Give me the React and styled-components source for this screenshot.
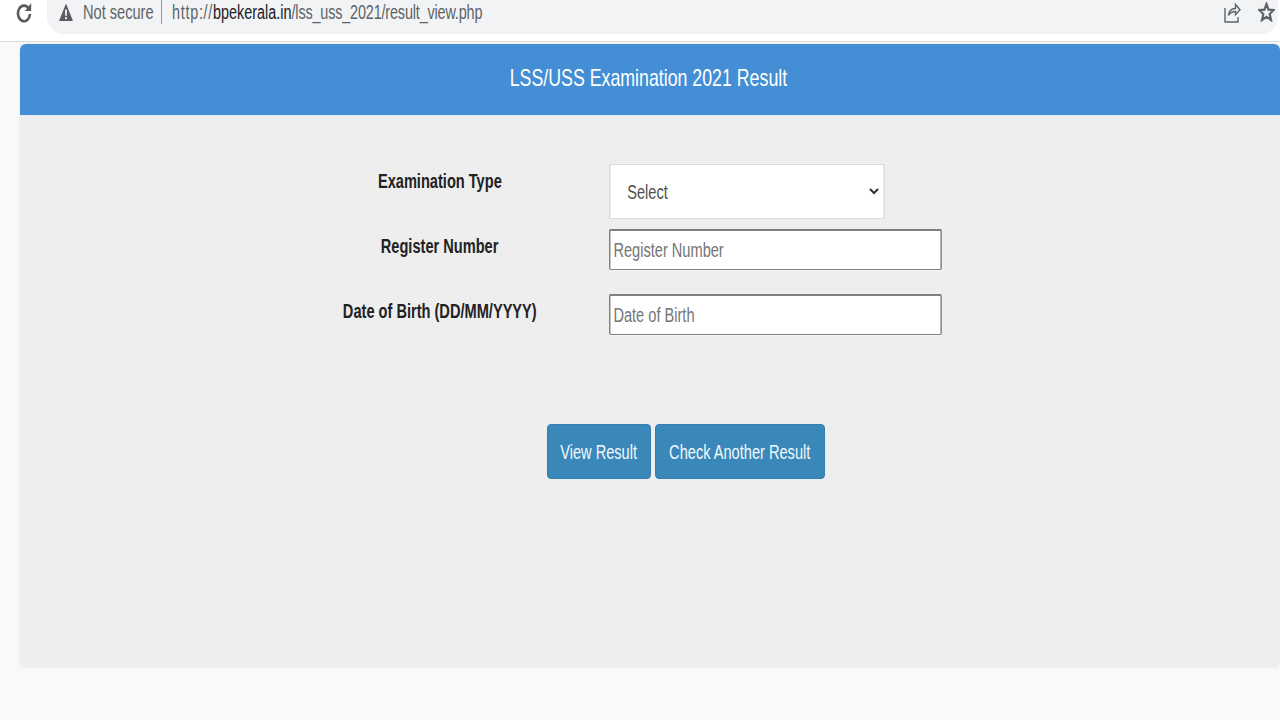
import React from "react";
import styled, { createGlobalStyle } from "styled-components";

const GlobalStyle = createGlobalStyle`
  html, body {
    margin: 0;
    padding: 0;
    height: 100%;
    background: #f9f9f9;
    font-family: "Liberation Sans", Arial, sans-serif;
    overflow: hidden;
  }
  * { box-sizing: border-box; }
`;

// the whole capture is squeezed horizontally, text and form controls with it
const SQUEEZE = 0.73;

const Squeezed = styled.span`
  display: inline-block;
  flex: none;
  white-space: nowrap;
  transform: scaleX(${(p) => p.$scale || SQUEEZE});
  transform-origin: ${(p) => p.$origin || "center"};
`;

const Page = styled.div`
  width: 1280px;
  height: 720px;
  display: flex;
  flex-direction: column;
`;

const BrowserBar = styled.div`
  height: 42px;
  flex: none;
  background: #fff;
  border-bottom: 1px solid #dcdcdc;
  display: flex;
  align-items: flex-start;
  padding-left: 16px;
`;

const Reload = styled.div`
  width: 18px;
  height: 24px;
  display: flex;
  align-items: center;
  margin-right: 13px;
  color: #5a5b5e;
`;

const Omnibox = styled.div`
  width: 1231px;
  height: 34px;
  background: #f1f3f4;
  border-radius: 0 0 17px 17px;
  display: flex;
  align-items: flex-start;
  padding: 0 3px 0 12px;
`;

const Warning = styled.div`
  height: 24px;
  display: flex;
  align-items: center;
  color: #5a5b5e;
  margin-right: 10px;
`;

const NotSecure = styled.div`
  width: 79px;
  height: 24px;
  display: flex;
  font-size: 20px;
  line-height: 25px;
  color: #5f6368;
  border-right: 1px solid #9a9a9a;
`;

const Url = styled.div`
  flex: 1;
  display: flex;
  min-width: 0;
  font-size: 20px;
  line-height: 25px;
  color: #5f6368;
  margin-left: 10px;
`;

const Scheme = styled.span`
  letter-spacing: 1px;
`;

const Host = styled.span`
  color: #202124;
`;

const UrlPath = styled.span`
  letter-spacing: -0.22px;
`;

const BarIcon = styled.div`
  width: 18px;
  height: 24px;
  display: flex;
  align-items: center;
  justify-content: center;
  margin-left: ${(p) => p.$gap}px;
  color: #5f6368;
`;

const Panel = styled.main`
  margin: 1px 0 0 19px;
  width: 1261px;
  height: 625px;
  background: #eeeeee;
  border-radius: 6px;
  display: flex;
  flex-direction: column;
`;

const PanelHeader = styled.header`
  height: 72px;
  margin: 1px 0 0 1px;
  padding: 0 3px 3px 0;
  background: #438ed4;
  border-radius: 6px 6px 0 0;
  border-bottom: 1px solid #e3ebf2;
  color: #fff;
  display: flex;
  align-items: center;
  justify-content: center;
  font-size: 24px;
`;

const Form = styled.form`
  display: flex;
  flex-direction: column;
  padding: 48px 0 0 301px;
`;

const Row = styled.div`
  display: grid;
  grid-template-columns: 240px auto;
  column-gap: 49px;
  align-items: start;
  margin-bottom: ${(p) => p.$bottom}px;
`;

const Label = styled.label`
  display: flex;
  justify-content: center;
  font-size: 20px;
  font-weight: 700;
  color: #222;
  line-height: 24px;
  padding-top: 5px;
`;

const ControlFrame = styled.div`
  position: relative;
  width: ${(p) => p.$width}px;
  height: ${(p) => p.$height}px;
`;

const Select = styled.select`
  appearance: none;
  width: ${276 / SQUEEZE}px;
  height: 55px;
  background: #fff;
  border-style: solid;
  border-color: #dadada;
  border-width: 1px 2px;
  border-radius: 0;
  padding-left: 23px;
  font-family: inherit;
  font-size: 20px;
  color: #505050;
  transform: scaleX(${SQUEEZE});
  transform-origin: left;
`;

const Chevron = styled.svg`
  position: absolute;
  top: 24px;
  right: 6px;
  pointer-events: none;
  color: #333;
`;

const Input = styled.input`
  width: ${333 / SQUEEZE}px;
  height: 41px;
  background: #fff;
  border: 2px solid #808080;
  border-bottom-width: 1px;
  border-radius: 2px;
  padding: 0 4px;
  font-family: inherit;
  font-size: 20px;
  transform: scaleX(${SQUEEZE});
  transform-origin: left;
  box-shadow: 0 1px 0 #f8f8f8;
  &::placeholder {
    color: #757575;
    opacity: 1;
  }
`;

const Actions = styled.div`
  display: flex;
  gap: 4px;
  margin: 89px 0 0 227px;
`;

const Button = styled.button`
  height: 55px;
  width: ${(p) => p.$width}px;
  display: flex;
  align-items: center;
  justify-content: center;
  background: #3a87b9;
  border: 1px solid #3580b0;
  border-radius: 4px;
  color: #f2f8fc;
  font-family: inherit;
  font-size: 20px;
  padding: 2px 0 0;
`;

const ReloadIcon = () => (
  <svg width="16" height="21" viewBox="0 0 16 21" fill="none">
    <path d="M12.600 6.400A6 7.800 0 1 0 14 12" stroke="currentColor" strokeWidth="2.600" />
    <path d="M15.200 1v8H9z" fill="currentColor" />
  </svg>
);

const WarningIcon = () => (
  <svg width="14" height="19" viewBox="0 0 14 19">
    <path
      fillRule="evenodd"
      fill="currentColor"
      d="M7 .5 14 18H0zM6.100 6.500v6.200h1.800V6.500zM6.100 14v2.200h1.800V14z"
    />
  </svg>
);

const ShareIcon = () => (
  <svg width="17" height="22" viewBox="0 0 17 22" fill="none" stroke="currentColor" strokeWidth="1.400">
    <path d="M1 7v14h13v-5" />
    <path d="M4.500 14.500c.3-4.500 3-7 7-7V3.500l4.500 5.200-4.500 4.900v-3.100c-3 0-5.300.9-7 4z" />
  </svg>
);

const StarIcon = () => (
  <svg width="17" height="20" viewBox="0 0 17 20" fill="none" stroke="currentColor" strokeWidth="2.200">
    <path d="M8.500 2l2 5.700 5.200.4-4 3.900 1.300 6-4.500-3.200L4 18l1.300-6-4-3.900 5.200-.4z" />
  </svg>
);

export default function App() {
  return (
    <Page>
      <GlobalStyle />
      <BrowserBar>
        <Reload>
          <ReloadIcon />
        </Reload>
        <Omnibox>
          <Warning>
            <WarningIcon />
          </Warning>
          <NotSecure>
            <Squeezed $origin="left">Not secure</Squeezed>
          </NotSecure>
          <Url>
            <Squeezed $origin="left" $scale={0.72}>
              <Scheme>http://</Scheme>
              <Host>bpekerala.in</Host>
              <UrlPath>/lss_uss_2021/result_view.php</UrlPath>
            </Squeezed>
          </Url>
          <BarIcon>
            <ShareIcon />
          </BarIcon>
          <BarIcon $gap={16}>
            <StarIcon />
          </BarIcon>
        </Omnibox>
      </BrowserBar>
      <Panel>
        <PanelHeader>
          <Squeezed $scale={0.74}>LSS/USS Examination 2021 Result</Squeezed>
        </PanelHeader>
        <Form onSubmit={(e) => e.preventDefault()}>
          <Row $bottom={10}>
            <Label>
              <Squeezed>Examination Type</Squeezed>
            </Label>
            <ControlFrame $width={276} $height={55}>
              <Select defaultValue="">
                <option value="">Select</option>
                <option value="LSS">LSS</option>
                <option value="USS">USS</option>
              </Select>
              <Chevron width="10" height="7" viewBox="0 0 10 7" fill="none">
                <path d="M1 1l4 4 4-4" stroke="currentColor" strokeWidth="2" />
              </Chevron>
            </ControlFrame>
          </Row>
          <Row $bottom={24}>
            <Label>
              <Squeezed>Register Number</Squeezed>
            </Label>
            <ControlFrame $width={333} $height={41}>
              <Input placeholder="Register Number" />
            </ControlFrame>
          </Row>
          <Row $bottom={0}>
            <Label>
              <Squeezed>Date of Birth (DD/MM/YYYY)</Squeezed>
            </Label>
            <ControlFrame $width={333} $height={41}>
              <Input placeholder="Date of Birth" />
            </ControlFrame>
          </Row>
          <Actions>
            <Button $width={104}>
              <Squeezed>View Result</Squeezed>
            </Button>
            <Button $width={170}>
              <Squeezed>Check Another Result</Squeezed>
            </Button>
          </Actions>
        </Form>
      </Panel>
    </Page>
  );
}
